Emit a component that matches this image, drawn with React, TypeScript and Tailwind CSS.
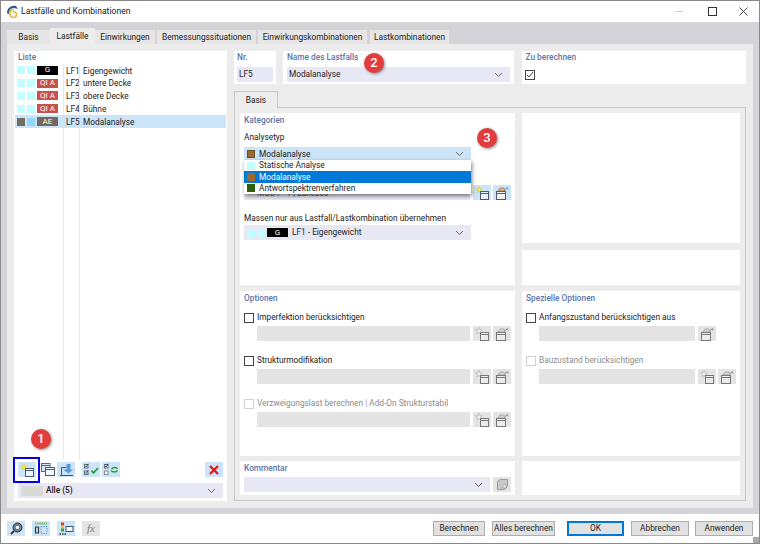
import React from 'react';

const FONT = 'font-["Roboto","Liberation_Sans",sans-serif]';

const Chevron = () => (
  <svg width="9" height="6" viewBox="0 0 9 6" className="shrink-0">
    <path d="M1 1l3.5 3.5L8 1" fill="none" stroke="#6b6b6b" strokeWidth="1" />
  </svg>
);

// small window + star, the "new" button of the dialog
const NewIcon = ({ off = false }: { off?: boolean }) => (
  <svg width="15" height="14" viewBox="0 0 15 14">
    <path d="M4 0.5l0.9 2.2 2.4 0.2-1.8 1.5 0.6 2.3L4 5.5 1.9 6.7l0.6-2.3L0.7 2.9l2.4-0.2z" fill={off ? '#f2f2f2' : '#f7e84a'} stroke={off ? '#9a9a9a' : '#d4c23a'} strokeWidth="0.5" />
    <rect x="5.5" y="5.5" width="8" height="8" fill={off ? '#ececec' : '#eaf3fb'} stroke={off ? '#777' : '#4a5a70'} />
    <path d="M5.5 7.5h8" stroke={off ? '#777' : '#4a5a70'} strokeWidth="1" />
  </svg>
);

const EditIcon = ({ off = false }: { off?: boolean }) => (
  <svg width="15" height="14" viewBox="0 0 15 14">
    <rect x="1.5" y="5.5" width="9" height="8" fill={off ? '#ececec' : '#f3f3f3'} stroke={off ? '#777' : '#4a5a70'} />
    <path d="M1.5 7.5h9" stroke={off ? '#777' : '#4a5a70'} strokeWidth="1" />
    <path d="M3 5l2-3h4l1 3z" fill={off ? '#d8d8d8' : '#d9b98a'} stroke={off ? '#888' : '#8a6a3a'} strokeWidth="0.6" />
    <path d="M10 3.5l2.5-2M12.5 1.5l0.5 2" stroke={off ? '#888' : '#5b9bd5'} strokeWidth="1" fill="none" />
  </svg>
);

const CopyIcon = () => (
  <svg width="14" height="13" viewBox="0 0 14 13">
    <rect x="0.5" y="0.5" width="8.5" height="8" fill="#dbe6f0" stroke="#5a6a80" />
    <path d="M0.5 2.5h8.5" stroke="#5a6a80" />
    <rect x="4.5" y="4.5" width="9" height="8" fill="#eef5fb" stroke="#4a5a70" />
    <path d="M4.5 6.5h9" stroke="#4a5a70" />
  </svg>
);

const ImportIcon = () => (
  <svg width="15" height="13" viewBox="0 0 15 13">
    <path d="M2.5 12V4.5h5" stroke="#44546a" strokeWidth="1" fill="none" />
    <path d="M4 6.5h3.5V1h4v5.5H14L9.5 10.5z" fill="#5b9bd5" />
    <path d="M1 12.5h13" stroke="#44546a" strokeWidth="1.1" />
  </svg>
);

const CheckAllIcon = () => (
  <svg width="15" height="13" viewBox="0 0 15 13">
    <rect x="0.5" y="1.5" width="3.5" height="3.5" fill="#fff" stroke="#5a6a80" />
    <rect x="0.5" y="8" width="3.5" height="3.5" fill="#fff" stroke="#5a6a80" />
    <path d="M1.2 3l1 1 2-3.2M1.2 9.5l1 1 2-3.2" stroke="#222" strokeWidth="0.8" fill="none" />
    <path d="M7.5 7.5l2 2.5L14 5" stroke="#1e9e3a" strokeWidth="1.7" fill="none" />
  </svg>
);

const SwapIcon = () => (
  <svg width="15" height="13" viewBox="0 0 15 13">
    <rect x="0.5" y="1.5" width="3.5" height="3.5" fill="#fff" stroke="#5a6a80" />
    <rect x="0.5" y="8" width="3.5" height="3.5" fill="#fff" stroke="#8a8a8a" />
    <path d="M1.2 3l1 1 2-3.2" stroke="#222" strokeWidth="0.8" fill="none" />
    <path d="M13.5 6C12.5 4 9 4 7.5 6" stroke="#1e9e3a" strokeWidth="1.3" fill="none" />
    <path d="M7 7.5C8.5 9.5 12 9.5 13.5 7.5" stroke="#1e9e3a" strokeWidth="1.3" fill="none" />
  </svg>
);

const IconBtn = ({ children, off = false, className = '' }: { children: React.ReactNode; off?: boolean; className?: string }) => (
  <div className={`w-[18px] h-[15px] shrink-0 flex items-center justify-center ${off ? 'bg-[#e4e4e4]' : 'bg-[#cce4f7]'} ${className}`}>
    {children}
  </div>
);

const Swatch = ({ color }: { color: string }) => <div className="w-2 h-2 shrink-0" style={{ backgroundColor: color }} />;

const Tag = ({ label, bg }: { label: string; bg: string }) => (
  <div className="w-[21px] h-[9px] shrink-0 flex items-center justify-center text-white text-[8px] leading-none" style={{ backgroundColor: bg }}>
    {label}
  </div>
);

const cases = [
  { nr: 'LF1', name: 'Eigengewicht', tag: 'G', bg: '#000000' },
  { nr: 'LF2', name: 'untere Decke', tag: 'QI A', bg: '#c8504f' },
  { nr: 'LF3', name: 'obere Decke', tag: 'QI A', bg: '#c8504f' },
  { nr: 'LF4', name: 'Bühne', tag: 'QI A', bg: '#c8504f' },
  { nr: 'LF5', name: 'Modalanalyse', tag: 'AE', bg: '#74695c', active: true },
];

const Title = ({ children }: { children: React.ReactNode }) => (
  <div className="text-[#5f74a8] font-medium leading-[12px]">{children}</div>
);

const Panel = ({ children, className = '' }: { children?: React.ReactNode; className?: string }) => (
  <div className={`bg-white ${className}`}>{children}</div>
);

const Select = ({ children, className = '' }: { children: React.ReactNode; className?: string }) => (
  <div className={`h-[15px] bg-[#e8e8f4] flex items-center pr-[7px] ${className}`}>
    <div className="flex-1 flex items-center min-w-0">{children}</div>
    <Chevron />
  </div>
);

const Check = ({ off = false, on = false }: { off?: boolean; on?: boolean }) => (
  <div className={`w-[10px] h-[10px] shrink-0 border bg-white flex items-center justify-center ${off ? 'border-[#d0d0d0]' : 'border-[#444]'}`}>
    {on && (
      <svg width="8" height="8" viewBox="0 0 8 8">
        <path d="M1 4l2 2 4-5" fill="none" stroke="#444" strokeWidth="1" />
      </svg>
    )}
  </div>
);

const OptionRow = ({ label, off = false, first = true, second = true, inputW }: { label: string; off?: boolean; first?: boolean; second?: boolean; inputW: string }) => (
  <div className="h-[43px]">
    <div className="flex items-center gap-[3px] h-[11px]">
      <Check off={off} />
      <span className={off ? 'text-[#8c8c8c]' : 'text-[#222]'}>{label}</span>
    </div>
    <div className="flex gap-[3px] pl-[13px] mt-[3px]">
      <div className={`h-[15px] bg-[#e4e4e4] ${inputW}`} />
      <div className="flex gap-[2px]">
        {first && <IconBtn off><NewIcon off /></IconBtn>}
        {second && <IconBtn off><EditIcon off /></IconBtn>}
      </div>
    </div>
  </div>
);

const Badge = ({ n, className }: { n: number; className: string }) => (
  <div className={`absolute w-5 h-5 rounded-full bg-[#e23d3d] text-white text-[13px] font-medium flex items-center justify-center shadow-[1px_1px_3px_rgba(0,0,0,0.45)] ${className}`}>
    {n}
  </div>
);

const BottomButton = ({ label, w, def = false }: { label: string; w: string; def?: boolean }) => (
  <div className={`${w} h-[15px] flex items-center justify-center bg-[#e1e1e1] border text-[#222] whitespace-nowrap ${def ? 'border-[#0078d7] border-2' : 'border-[#adadad]'}`}>
    {label}
  </div>
);

const tabs = [
  { label: 'Basis', w: 'w-[43px]' },
  { label: 'Lastfälle', w: 'w-[45px]', active: true },
  { label: 'Einwirkungen', w: 'w-[60px]' },
  { label: 'Bemessungssituationen', w: 'w-[99px] ml-[2px]' },
  { label: 'Einwirkungskombinationen', w: 'w-[109px] ml-[2px]' },
  { label: 'Lastkombinationen', w: 'w-[79px] ml-[3px]' },
];

export default function App() {
  return (
    <div className={`relative w-[760px] h-[544px] overflow-hidden bg-white border border-[#8a8a8a] text-[8.3px] text-[#222] ${FONT}`}>
      {/* title bar */}
      <div className="h-[21px] flex items-center bg-white">
        <svg width="13" height="13" viewBox="0 0 13 13" className="ml-[5px]">
          <path d="M1 8C1 3 5 0 10 1l2 3-4-1C5 3 3 5 3 9z" fill="#2f5d8a" />
          <path d="M8 4.5C5.5 4 4 6 4 8.5 4 11 5.5 12.5 7.5 12.5S10.5 11 10.5 9.2 9 6.5 7 7" fill="none" stroke="#e8b93a" strokeWidth="1.6" />
        </svg>
        <span className="ml-[2px] text-[8.6px]">Lastfälle und Kombinationen</span>
        <div className="ml-auto flex items-center">
          <div className="w-[7px] h-px bg-[#c8c8c8]" />
          <div className="w-[9px] h-[9px] border border-[#333] ml-[25px]" />
          <svg width="9" height="9" viewBox="0 0 9 9" className="ml-[22px] mr-[11px]">
            <path d="M0.5 0.5l8 8M8.5 0.5l-8 8" stroke="#333" strokeWidth="0.9" />
          </svg>
        </div>
      </div>

      <div className="bg-[#d4d4d8] px-[6px] pb-[6px]">
        {/* dialog tabs */}
        <div className="h-[22px] flex items-end">
          {tabs.map((t) => (
            <div key={t.label} className={`${t.w} flex items-center justify-center whitespace-nowrap ${t.active ? 'h-[16px] bg-[#ececec]' : 'h-[14px] bg-[#e6e6e6]'}`}>
              {t.label}
            </div>
          ))}
        </div>

        <div className="h-[464px] bg-[#ececec] p-[7px] flex gap-[7px]">
          {/* left list */}
          <Panel className="w-[213px] h-[450px] flex flex-col px-px">
            <div className="pl-[3px] h-[13px]"><Title>Liste</Title></div>
            <div className="flex-1 flex flex-col min-h-0">
              {cases.map((c) => (
                <div key={c.nr} className={`h-[12.8px] flex items-stretch shrink-0 ${c.active ? 'bg-[#cce4f7]' : ''}`}>
                  <div className="w-[48px] flex items-center gap-[2px] pl-[2px]">
                    <Swatch color={c.active ? '#706f5e' : '#c4fdff'} />
                    <Swatch color={c.active ? '#8fd8f8' : '#c4fdff'} />
                    <Tag label={c.tag} bg={c.bg} />
                  </div>
                  <div className={`w-[16px] flex items-center pl-[2px] pt-px border-l ${c.active ? 'border-transparent' : 'border-[#e8e8e8]'}`}>{c.nr}</div>
                  <div className={`flex-1 flex items-center pl-[3px] pt-px border-l ${c.active ? 'border-transparent' : 'border-[#e8e8e8]'}`}>{c.name}</div>
                </div>
              ))}
              <div className="h-[332px] flex shrink-0">
                <div className="w-[48px]" />
                <div className="w-[16px] border-l border-[#e8e8e8]" />
                <div className="border-l border-[#e8e8e8]" />
              </div>
            </div>
            <div className="flex items-center px-[3px]">
              <IconBtn><NewIcon /></IconBtn>
              <IconBtn className="ml-[3px] bg-white!"><CopyIcon /></IconBtn>
              <IconBtn><ImportIcon /></IconBtn>
              <IconBtn className="ml-[7px]"><CheckAllIcon /></IconBtn>
              <IconBtn className="ml-[2px]"><SwapIcon /></IconBtn>
              <IconBtn className="ml-auto">
                <svg width="10" height="10" viewBox="0 0 10 10">
                  <path d="M1 1l8 8M9 1L1 9" stroke="#e01b1b" strokeWidth="2.4" />
                </svg>
              </IconBtn>
            </div>
            <Select className="mx-[3px] mt-[6px] mb-[3px] shrink-0">
              <div className="w-[22px] h-[10px] bg-[#d9d9d9] ml-[3px]" />
              <span className="ml-[3px] font-medium">Alle (5)</span>
            </Select>
          </Panel>

          <div className="w-[512px] flex flex-col">
            {/* top boxes */}
            <div className="flex h-[33px] gap-[7px]">
              <Panel className="w-[42px] px-[3px]">
                <Title>Nr.</Title>
                <div className="h-[15px] mt-[4px] bg-[#e8e8f4] flex items-center pl-[2px]">LF5</div>
              </Panel>
              <Panel className="w-[232px] px-[4px]">
                <Title>Name des Lastfalls</Title>
                <Select className="mt-[4px]"><span className="pl-[2px]">Modalanalyse</span></Select>
              </Panel>
              <Panel className="w-[224px] ml-px px-[3px]">
                <Title>Zu berechnen</Title>
                <div className="mt-[7px]"><Check on /></div>
              </Panel>
            </div>

            <div className="mt-[7px] w-[44px] h-[17px] -mb-px z-10 flex items-center justify-center bg-[#ececec] border border-b-0 border-[#c8c8c8]">Basis</div>

            <div className="h-[394px] border border-[#c8c8c8] p-[5px] flex gap-[7px]">
              <div className="w-[275px] flex flex-col">
                <Panel className="h-[172px] px-[4px] pt-[1px]">
                  <Title>Kategorien</Title>
                  <div className="mt-[5px] leading-[12px]">Analysetyp</div>
                  <Select className="w-[227px] mt-[4px] pb-px bg-[#cce4f7]!">
                    <div className="ml-[3px] mr-[4px] w-2 h-2 bg-[#9a6a2e] border border-[#6e4c22]" />
                    Modalanalyse
                  </Select>
                  {/* covered row below the open menu */}
                  <div className="flex gap-[3px] mt-[23px]">
                    <div className="w-[227px] h-[15px] bg-[#e8e8f4] pl-[13px] text-[#555] leading-[17px]">MOD1 - 1 | Lanczos</div>
                    <div className="flex gap-[2px]">
                      <IconBtn><NewIcon /></IconBtn>
                      <IconBtn><EditIcon /></IconBtn>
                    </div>
                  </div>
                  <div className="mt-[12px] leading-[12px]">Massen nur aus Lastfall/Lastkombination übernehmen</div>
                  <Select className="w-[227px] mt-[1px]">
                    <div className="ml-[3px] flex items-center gap-[2px]">
                      <Swatch color="#c4fdff" />
                      <Swatch color="#c4fdff" />
                      <Tag label="G" bg="#000000" />
                    </div>
                    <span className="ml-[4px]">LF1 - Eigengewicht</span>
                  </Select>
                </Panel>

                <Panel className="h-[165px] mt-[6px] px-[4px] pt-[1px]">
                  <Title>Optionen</Title>
                  <div className="mt-[8px]">
                    <OptionRow label="Imperfektion berücksichtigen" inputW="w-[214px]" />
                    <OptionRow label="Strukturmodifikation" inputW="w-[214px]" />
                    <OptionRow label="Verzweigungslast berechnen | Add-On Strukturstabil" off inputW="w-[214px]" />
                  </div>
                </Panel>

                <Panel className="h-[34px] mt-[5px] px-[4px] pt-[1px]">
                  <Title>Kommentar</Title>
                  <div className="flex gap-[3px] mt-[3px]">
                    <Select className="w-[247px]"><span /></Select>
                    <IconBtn off>
                      <svg width="11" height="11" viewBox="0 0 11 11">
                        <path d="M3 0.5h7.5v7l-3 3H0.5v-8z" fill="#c9c9c9" stroke="#9a9a9a" />
                        <rect x="6" y="6" width="3" height="3" fill="#efefef" stroke="#8a8a8a" strokeWidth="0.5" />
                      </svg>
                    </IconBtn>
                  </div>
                </Panel>
              </div>

              <div className="w-[218px] flex flex-col">
                <Panel className="h-[130px]" />
                <Panel className="h-[35px] mt-[7px]" />
                <Panel className="h-[165px] mt-[6px] px-[4px] pt-[1px]">
                  <Title>Spezielle Optionen</Title>
                  <div className="mt-[8px]">
                    <OptionRow label="Anfangszustand berücksichtigen aus" first={false} inputW="w-[156px]" />
                    <OptionRow label="Bauzustand berücksichtigen" off inputW="w-[156px]" />
                  </div>
                </Panel>
                <Panel className="h-[34px] mt-[5px]" />
              </div>
            </div>
          </div>
        </div>
      </div>

      {/* bottom bar */}
      <div className="h-[29px] flex items-center bg-white px-[6px]">
        <div className="flex gap-[7px]">
          <IconBtn>
            <svg width="13" height="13" viewBox="0 0 13 13">
              <circle cx="7.5" cy="5.5" r="4.5" fill="#6d7a86" stroke="#333" />
              <circle cx="7.5" cy="5.5" r="1.8" fill="#e8f2fb" />
              <path d="M4 9l-3 3" stroke="#333" strokeWidth="1.8" />
            </svg>
          </IconBtn>
          <IconBtn>
            <svg width="14" height="13" viewBox="0 0 14 13">
              <path d="M1 1.5h12" stroke="#7bb661" strokeWidth="2" strokeDasharray="1.5 0.7" />
              <rect x="7" y="4.5" width="6" height="7" fill="#cfe2f7" stroke="#5b9bd5" strokeDasharray="1.5 1" />
              <path d="M1.5 5h3v6h-3z" fill="none" stroke="#333" strokeWidth="1.2" />
            </svg>
          </IconBtn>
          <IconBtn>
            <svg width="15" height="13" viewBox="0 0 15 13">
              <rect x="2" y="0.5" width="3" height="3" fill="#e0322c" />
              <rect x="2" y="3.5" width="3" height="3" fill="#e8c52e" />
              <rect x="2" y="6.5" width="3" height="3" fill="#2e9e48" />
              <rect x="7" y="4.5" width="7" height="5" fill="#fff" stroke="#44546a" />
              <path d="M0.5 12h7" stroke="#333" strokeWidth="1.5" strokeDasharray="1.5 1" />
            </svg>
          </IconBtn>
          <IconBtn off>
            <span className="font-['Liberation_Serif',serif] italic text-[11px] text-[#777] leading-none">fx</span>
          </IconBtn>
        </div>
        <div className="ml-auto flex items-center">
          <BottomButton label="Berechnen" w="w-[52px]" />
          <BottomButton label="Alles berechnen" w="w-[63px] ml-[7px]" />
          <BottomButton label="OK" w="w-[57px] ml-[12px]" def />
          <BottomButton label="Abbrechen" w="w-[58px] ml-[7px]" />
          <BottomButton label="Anwenden" w="w-[58px] ml-[6px]" />
        </div>
      </div>

      {/* open combo list over the panel */}
      <div className="absolute left-[243px] top-[159px] w-[227px] h-[34px] bg-white shadow-[1px_2px_4px_rgba(0,0,0,0.5)]">
        {[
          { label: 'Statische Analyse', color: '#c4fdff' },
          { label: 'Modalanalyse', color: '#9a6a2e', active: true },
          { label: 'Antwortspektrenverfahren', color: '#2f5f0c' },
        ].map((o) => (
          <div key={o.label} className={`h-[11.4px] flex items-center pl-[3px] gap-[4px] ${o.active ? 'bg-[#0078d7] text-white' : ''}`}>
            <Swatch color={o.color} />
            {o.label}
          </div>
        ))}
      </div>

      {/* annotations from the docs */}
      <Badge n={1} className="left-[30px] top-[428px]" />
      <Badge n={2} className="left-[363px] top-[52px]" />
      <Badge n={3} className="left-[476px] top-[127px]" />
      <div className="absolute left-[12px] top-[456px] w-[27px] h-[26px] border-[2px] border-[#0000e0]" />
      <div className="absolute right-0 bottom-0 w-[6px] h-[6px] bg-[radial-gradient(#aaa_1px,transparent_1px)] bg-[length:2px_2px]" />
    </div>
  );
}
